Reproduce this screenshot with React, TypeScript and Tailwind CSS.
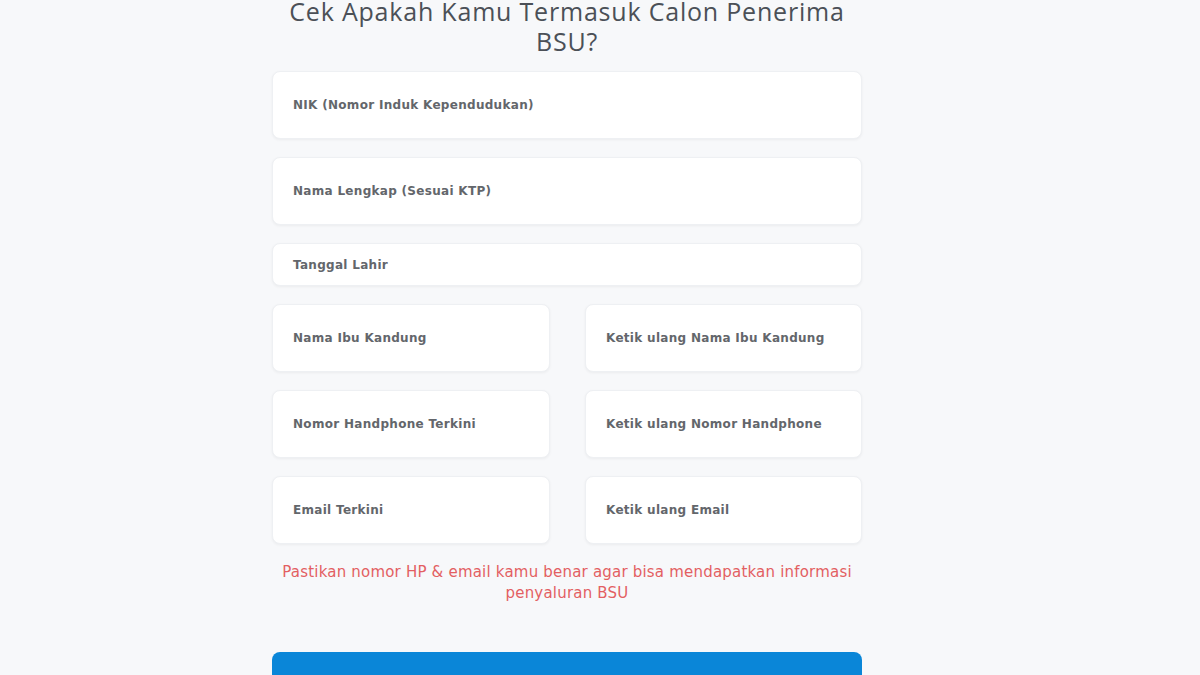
const fields = {
  nik: "NIK (Nomor Induk Kependudukan)",
  nama: "Nama Lengkap (Sesuai KTP)",
  tanggal: "Tanggal Lahir",
};

const pairs: [string, string][] = [
  ["Nama Ibu Kandung", "Ketik ulang Nama Ibu Kandung"],
  ["Nomor Handphone Terkini", "Ketik ulang Nomor Handphone"],
  ["Email Terkini", "Ketik ulang Email"],
];

const Field = ({ label, tall = true }: { label: string; tall?: boolean }) => (
  <div
    className={`flex items-center bg-white rounded-lg border border-[#eef0f3] shadow-[0_1px_3px_rgba(0,0,0,0.05)] px-5 ${
      tall ? "h-[68px]" : "h-[43px]"
    }`}
  >
    <span className="font-['DejaVu_Sans',sans-serif] text-[12px] font-bold text-[#63666b] tracking-[0.3px]">
      {label}
    </span>
  </div>
);

export default function App() {
  return (
    <div className="h-screen bg-[#f7f8fa] overflow-hidden font-['Open_Sans',sans-serif]">
      <div className="w-[590px] ml-[272px] -mt-[4px]">
        <h1 className="text-center text-[25px] leading-[30px] text-[#4b5057] font-normal tracking-[0.8px]">
          Cek Apakah Kamu Termasuk Calon Penerima
          <br />
          BSU?
        </h1>

        <div className="mt-[15px] flex flex-col gap-[18px]">
          <Field label={fields.nik} />
          <Field label={fields.nama} />
          <Field label={fields.tanggal} tall={false} />
          {pairs.map(([a, b]) => (
            <div key={a} className="grid grid-cols-[278px_277px] justify-between">
              <Field label={a} />
              <Field label={b} />
            </div>
          ))}
        </div>

        <p className="mt-[18px] text-center font-['DejaVu_Sans',sans-serif] text-[15px] leading-[21px] text-[#e35f62] tracking-[0.2px]">
          Pastikan nomor HP &amp; email kamu benar agar bisa mendapatkan informasi
          penyaluran BSU
        </p>

        <button className="mt-[48px] w-full h-[60px] rounded-lg bg-[#0a86d8]" />
      </div>
    </div>
  );
}
